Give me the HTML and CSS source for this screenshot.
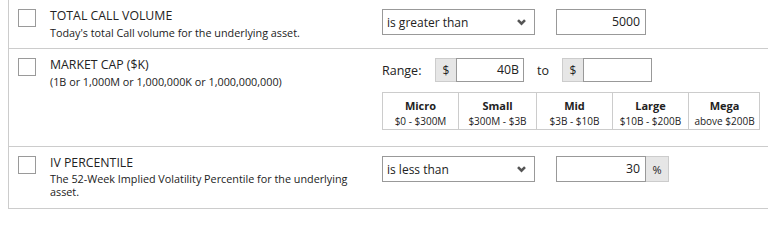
FILE: index.html
```html
<!DOCTYPE html>
<html>
<head>
<meta charset="utf-8">
<link rel="stylesheet" href="styles.css">
</head>
<body>
<div class="list">
  <div class="row first">
    <span class="cb"></span>
    <div class="label">
      <div class="title">TOTAL CALL VOLUME</div>
      <div class="desc">Today's total Call volume for the underlying asset.</div>
    </div>
    <div class="controls">
      <div class="line">
        <div class="select"><span>is greater than</span><svg class="chev" width="9" height="7" viewBox="0 0 9 7"><path d="M1 1.2 L4.5 4.7 L8 1.2" fill="none" stroke="#555" stroke-width="2.6"/></svg></div>
        <div class="input num">5000</div>
      </div>
    </div>
  </div>
  <div class="row mid">
    <span class="cb"></span>
    <div class="label">
      <div class="title">MARKET CAP ($K)</div>
      <div class="desc">(1B or 1,000M or 1,000,000K or 1,000,000,000)</div>
    </div>
    <div class="controls">
      <div class="line range">
        <span class="range-label">Range:</span>
        <div class="group">
          <span class="addon">$</span>
          <div class="input small num">40B</div>
        </div>
        <span class="to">to</span>
        <div class="group">
          <span class="addon">$</span>
          <div class="input small wide num"></div>
        </div>
      </div>
      <div class="caps">
        <div class="cap c1"><b>Micro</b><span>$0 - $300M</span></div>
        <div class="cap"><b>Small</b><span>$300M - $3B</span></div>
        <div class="cap"><b>Mid</b><span>$3B - $10B</span></div>
        <div class="cap"><b>Large</b><span>$10B - $200B</span></div>
        <div class="cap"><b>Mega</b><span>above $200B</span></div>
      </div>
    </div>
  </div>
  <div class="row last">
    <span class="cb"></span>
    <div class="label">
      <div class="title">IV PERCENTILE</div>
      <div class="desc wrap">The 52-Week Implied Volatility Percentile for the underlying asset.</div>
    </div>
    <div class="controls">
      <div class="line">
        <div class="select"><span>is less than</span><svg class="chev" width="9" height="7" viewBox="0 0 9 7"><path d="M1 1.2 L4.5 4.7 L8 1.2" fill="none" stroke="#555" stroke-width="2.6"/></svg></div>
        <div class="group">
          <div class="input num">30</div>
          <span class="addon pct">%</span>
        </div>
      </div>
    </div>
  </div>
</div>
</body>
</html>
```

FILE: styles.css
```css
* { box-sizing: border-box; }
html, body { margin: 0; padding: 0; background: #fff; }
body {
  font-family: "Open Sans", "Noto Sans", sans-serif;
  color: #222;
}
.list {
  margin-left: 8px;
  margin-top: -1px;
  border-left: 1px solid #ccc;
  border-top: 1px solid #ccc;
}
.row {
  display: grid;
  grid-template-columns: 18px 318px 1fr;
  column-gap: 14px;
  padding: 9px 0 9px 9px;
  border-bottom: 1px solid #ccc;
  align-items: start;
}
.row.first { padding-bottom: 8px; }
.row.mid { padding-bottom: 16px; }
.row.last { padding-bottom: 10px; }
.cb {
  width: 18px;
  height: 18px;
  border: 1px solid #9a9a9a;
  background: #fff;
  display: block;
}
.label { margin-top: -1px; }
.title {
  font-size: 12.3px;
  line-height: 16px;
  color: #222;
}
.desc {
  font-size: 10.8px;
  line-height: 15px;
  margin-top: 1px;
  color: #222;
}
.desc.wrap {
  line-height: 12.5px;
  margin-top: 2px;
  width: 310px;
}
.controls { display: flex; flex-direction: column; }
.line { display: flex; align-items: center; }
.select {
  width: 153px;
  height: 26px;
  border: 1px solid #999;
  display: flex;
  align-items: center;
  justify-content: space-between;
  padding: 0 8px 0 4px;
  font-size: 12px;
  color: #222;
  margin-right: 21px;
}
.chev { display: block; }
.input {
  width: 90px;
  height: 26px;
  border: 1px solid #999;
  font-size: 12.3px;
  line-height: 24px;
  padding: 0 5px;
  color: #222;
}
.num { text-align: right; }
.group { display: flex; }
.addon {
  background: #e6e6e6;
  border: 1px solid #ccc;
  border-right: none;
  font-size: 12px;
  color: #222;
  display: flex;
  align-items: center;
  justify-content: center;
}
.addon.pct {
  width: 23px;
  height: 26px;
  border-left: none;
  border-right: 1px solid #ccc;
  font-size: 11px;
}
.range .addon { width: 21px; height: 24px; }
.input.small {
  width: 68px;
  height: 24px;
  line-height: 22px;
  padding-right: 4px;
}
.input.small.wide { width: 69px; }
.range-label {
  font-size: 12.5px;
  width: 53px;
}
.to {
  font-size: 12.5px;
  width: 38px;
  padding-left: 13px;
}
.caps {
  margin-top: 10px;
  display: grid;
  grid-template-columns: 75px 78px 76px 76px 72px;
  border: 1px solid #ccc;
  width: 378px;
  height: 38px;
}
.cap {
  display: flex;
  flex-direction: column;
  align-items: center;
  border-left: 1px solid #ccc;
  padding-top: 5px;
}
.cap.c1 { border-left: none; }
.cap b {
  font-size: 11px;
  line-height: 15px;
  font-weight: 700;
  color: #222;
}
.cap span {
  font-size: 10px;
  line-height: 13px;
  margin-top: 2px;
  color: #222;
  white-space: nowrap;
}
```
